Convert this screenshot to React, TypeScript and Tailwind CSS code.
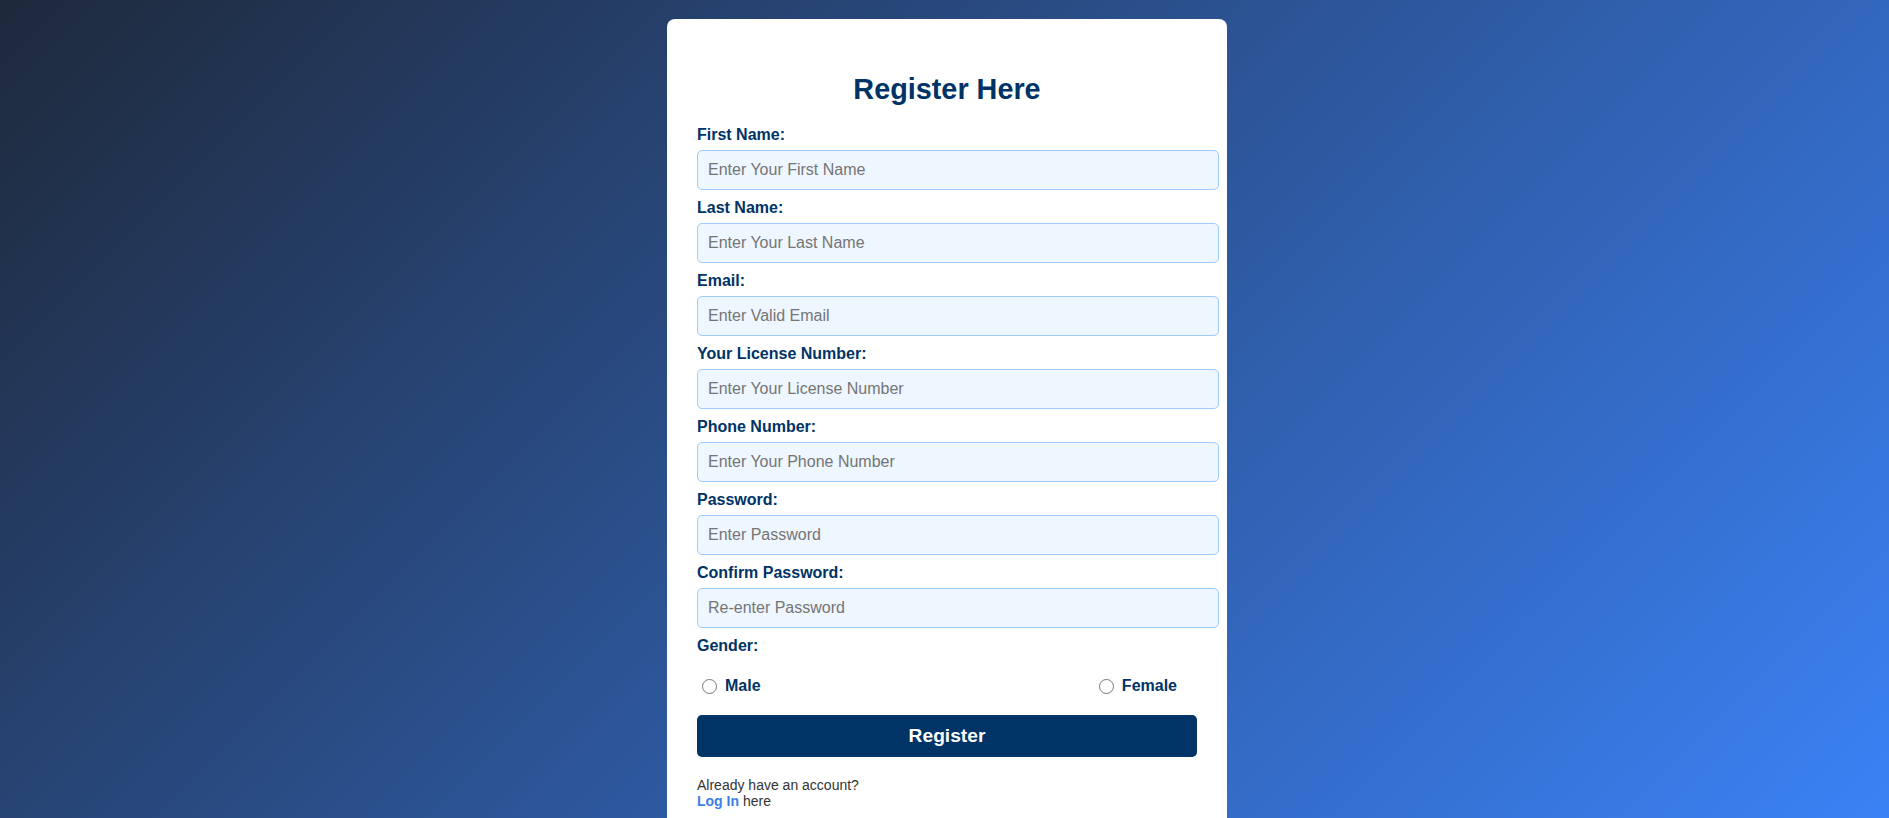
import React from "react";

const fields = [
  { label: "First Name:", placeholder: "Enter Your First Name", type: "text" },
  { label: "Last Name:", placeholder: "Enter Your Last Name", type: "text" },
  { label: "Email:", placeholder: "Enter Valid Email", type: "email" },
  { label: "Your License Number:", placeholder: "Enter Your License Number", type: "text" },
  { label: "Phone Number:", placeholder: "Enter Your Phone Number", type: "tel" },
  { label: "Password:", placeholder: "Enter Password", type: "password" },
  { label: "Confirm Password:", placeholder: "Re-enter Password", type: "password" },
];

export default function App() {
  const [gender, setGender] = React.useState("");

  return (
    <div className="h-screen overflow-hidden bg-[linear-gradient(135deg,#1e293b,#3b82f6)] flex justify-center pt-[19px] pl-[5px] font-['Liberation_Sans',Arial,sans-serif]">
      <div className="box-content w-[500px] h-fit bg-white rounded-lg px-[30px] pt-[32px] pb-[30px]">
        <h2 className="mt-[22px] mb-[20px] text-center text-[28.8px] leading-[33px] font-bold text-[#003366]">
          Register Here
        </h2>

        <form onSubmit={(e) => e.preventDefault()}>
          {fields.map((f) => (
            <div key={f.label}>
              <label className="block mb-[6px] text-[16px] leading-[18px] font-bold text-[#003366]">
                {f.label}
              </label>
              <input
                type={f.type}
                placeholder={f.placeholder}
                className="box-content block w-full h-[18px] mb-[9px] px-[10px] py-[10px] text-[16px] leading-[18px] bg-[#eef6ff] border border-[#9ecbfc] rounded-[5px] text-[#003366] placeholder:text-[#757575] outline-none"
              />
            </div>
          ))}

          <label className="block mb-[22px] text-[16px] leading-[18px] font-bold text-[#003366]">
            Gender:
          </label>
          <div className="flex justify-between h-[18px]">
            <label className="flex items-center mr-[20px] text-[16px] leading-[18px] font-bold text-[#003366]">
              <input
                type="radio"
                name="gender"
                checked={gender === "male"}
                onChange={() => setGender("male")}
                className="w-[15px] h-[15px] ml-[5px] mr-[8px]"
              />
              Male
            </label>
            <label className="flex items-center mr-[20px] text-[16px] leading-[18px] font-bold text-[#003366]">
              <input
                type="radio"
                name="gender"
                checked={gender === "female"}
                onChange={() => setGender("female")}
                className="w-[15px] h-[15px] ml-[5px] mr-[8px]"
              />
              Female
            </label>
          </div>

          <button
            type="submit"
            className="block w-full h-[42px] mt-[20px] bg-[#003366] text-white text-[19.2px] font-bold rounded-[5px]"
          >
            Register
          </button>
        </form>

        <p className="mt-[20px] text-[14px] leading-[16px] text-[#333333]">
          Already have an account?
          <br />
          <a href="#" className="font-bold text-[#3b7ee8]">
            Log In
          </a>{" "}
          here
        </p>
      </div>
    </div>
  );
}
